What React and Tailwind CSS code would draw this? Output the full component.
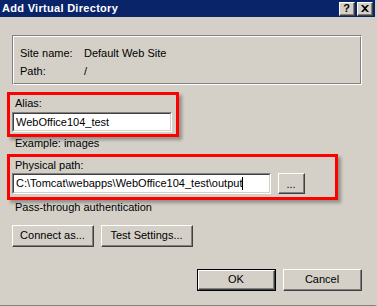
import React from "react";

function Raised({ className = "", children, def = false }) {
  const inner = (
    <div className="h-full w-full border-t border-l border-t-white border-l-white border-b border-r border-b-[#404040] border-r-[#404040]">
      <div className="h-full w-full border-b border-r border-b-[#808080] border-r-[#808080] flex items-center justify-center">
        {children}
      </div>
    </div>
  );
  if (def) {
    return <div className={"border border-black " + className}>{inner}</div>;
  }
  return <div className={className}>{inner}</div>;
}

function Sunken({ className = "", children }) {
  return (
    <div className={"border-t border-l border-t-[#808080] border-l-[#808080] border-b border-r border-b-white border-r-white " + className}>
      <div className="h-full w-full border-t border-l border-t-[#404040] border-l-[#404040] border-b border-r border-b-[#d4d0c8] border-r-[#d4d0c8] bg-white flex items-center pl-[1px]">
        {children}
      </div>
    </div>
  );
}

export default function App() {
  return (
    <div
      className="w-[377px] h-[306px] bg-[#d4d0c8] text-black text-[11px] leading-[13px] flex flex-col border-r-2 border-r-[#d4d0c8] border-b border-b-[#808080] overflow-hidden"
      style={{ fontFamily: '"Liberation Sans", Arial, sans-serif' }}
    >
      {/* Title bar */}
      <div className="h-[17px] bg-[#0a246a] flex items-center justify-between pl-[2px] pr-[2px] shrink-0">
        <span className="text-white font-bold text-[11px] leading-[13px] tracking-[0.3px]">Add Virtual Directory</span>
        <div className="flex gap-[2px] pt-[1px]">
          <Raised className="w-[16px] h-[14px] bg-[#d4d0c8]">
            <span className="font-bold text-[11px] leading-[11px]">?</span>
          </Raised>
          <Raised className="w-[16px] h-[14px] bg-[#d4d0c8]">
            <svg width="8" height="7" viewBox="0 0 8 7">
              <path d="M0 0 L2 0 L4 2 L6 0 L8 0 L5 3.5 L8 7 L6 7 L4 5 L2 7 L0 7 L3 3.5 Z" fill="black" />
            </svg>
          </Raised>
        </div>
      </div>

      <div className="pl-[12px] flex flex-col">
        {/* Group box */}
        <div className="mt-[18px] w-[350px] h-[50px] border border-t-[#808080] border-l-[#808080] border-b-white border-r-white">
          <div className="h-full w-full border border-t-white border-l-white border-b-[#808080] border-r-[#808080] pl-[6px] pt-[10px] flex flex-col gap-[5px]">
            <div className="flex">
              <span className="w-[64px]">Site name:</span>
              <span>Default Web Site</span>
            </div>
            <div className="flex">
              <span className="w-[64px]">Path:</span>
              <span>/</span>
            </div>
          </div>
        </div>

        {/* Alias */}
        <div className="-ml-[5px] mt-[7px] w-[172px] border-[3px] border-[#ff0000] pl-[2px] pt-[2px] pb-[2px] shadow-[3px_3px_3px_rgba(0,0,0,0.3)]">
          <div className="pl-[3px]">Alias:</div>
          <Sunken className="mt-[2px] w-[160px] h-[20px]">
            <span className="pl-[1px]">WebOffice104_test</span>
          </Sunken>
        </div>
        <div className="pl-[3px] mt-[0px]">Example: images</div>

        {/* Physical path */}
        <div className="-ml-[5px] mt-[4px] w-[331px] border-[3px] border-[#ff0000] pl-[2px] pt-[2px] pb-[3px] shadow-[3px_3px_3px_rgba(0,0,0,0.3)]">
          <div className="pl-[3px]">Physical path:</div>
          <div className="mt-[1px] flex gap-[7px] items-center">
            <Sunken className="w-[259px] h-[21px]">
              <span className="pl-[1px]">C:\Tomcat\webapps\WebOffice104_test\output</span>
              <span className="inline-block w-[1px] h-[13px] bg-black"></span>
            </Sunken>
            <Raised className="w-[27px] h-[21px]">
              <span className="leading-[11px] pt-[3px]">...</span>
            </Raised>
          </div>
        </div>
        <div className="pl-[3px] mt-[1px]">Pass-through authentication</div>

        {/* Connect / Test */}
        <div className="mt-[11px] flex gap-[7px]">
          <Raised className="w-[82px] h-[22px]">Connect as...</Raised>
          <Raised className="w-[92px] h-[22px]">Test Settings...</Raised>
        </div>

        {/* OK / Cancel */}
        <div className="mt-[22px] flex gap-[7px] pl-[185px]">
          <Raised def className="w-[79px] h-[22px]">OK</Raised>
          <Raised className="w-[79px] h-[22px]">Cancel</Raised>
        </div>
      </div>
    </div>
  );
}
